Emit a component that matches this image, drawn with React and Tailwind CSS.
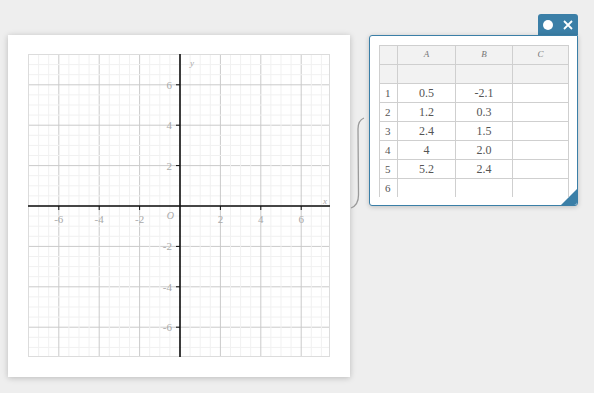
import React from "react";

const S = 20.2;
const O = 152;
const steps = Array.from({ length: 31 }, (_, i) => i - 15);
const ticks = [-6, -4, -2, 2, 4, 6];

const rows = [
  ["1", "0.5", "-2.1"],
  ["2", "1.2", "0.3"],
  ["3", "2.4", "1.5"],
  ["4", "4", "2.0"],
  ["5", "5.2", "2.4"],
  ["6", "", ""],
];

const Graph = () => {
  return (
    <svg width="302" height="303" className="block" style={{ fontFamily: '"Liberation Serif", serif' }}>
      {steps.map((k) => {
        const p = O + (k * S) / 2;
        const major = k % 4 === 0;
        return (
          <g key={k}>
            <line x1={p} y1="0" x2={p} y2="303" stroke={major ? "#cacaca" : "#f1f1f1"} strokeWidth="1" />
            <line x1="0" y1={O - (k * S) / 2} x2="302" y2={O - (k * S) / 2} stroke={major ? "#cacaca" : "#f1f1f1"} strokeWidth="1" />
          </g>
        );
      })}
      <rect x="0.5" y="0.5" width="301" height="302" fill="none" stroke="#dcdcdc" />
      <line x1="0" y1={O} x2="302" y2={O} stroke="#111" strokeWidth="1.6" />
      <line x1={O} y1="0" x2={O} y2="303" stroke="#111" strokeWidth="1.6" />
      {ticks.map((v) => (
        <g key={v} fill="#a9a9a9" fontSize="11">
          <line x1={O + v * S} y1={O} x2={O + v * S} y2={O + 4} stroke="#111" strokeWidth="1" />
          <text x={O + v * S} y={O + 17} textAnchor="middle">{v}</text>
          <line x1={O - 4} y1={O - v * S} x2={O} y2={O - v * S} stroke="#111" strokeWidth="1" />
          <text x={O - 8} y={O - v * S + 4} textAnchor="end">{v}</text>
        </g>
      ))}
      <text x={O - 6} y={O + 13} textAnchor="end" fontSize="10" fontStyle="italic" fill="#a9a9a9">O</text>
      <text x="162" y="12" fontSize="9" fontStyle="italic" fill="#a9a9a9">y</text>
      <text x="295" y="150" fontSize="9" fontStyle="italic" fill="#a9a9a9">x</text>
    </svg>
  );
};

const App = () => {
  return (
    <div className="w-[594px] h-[393px] bg-[#eeeeee] flex items-start pl-2 pt-[14px] font-['Liberation_Serif',serif]">
      {/* graph paper */}
      <div className="mt-[21px] w-[342px] h-[342px] bg-white shadow-[0_1px_6px_rgba(0,0,0,0.22)] pl-5 pt-[19px]">
        <Graph />
      </div>

      {/* link bracket */}
      <div className="w-[19px] mt-[103px]">
        <svg width="19" height="92" className="block">
          <path d="M14 1 C9 3 8 7 8 12 L8.5 78 C8.5 85 6 89 1 91" fill="none" stroke="#9a9a9a" strokeWidth="1.3" />
        </svg>
      </div>

      {/* table window */}
      <div className="flex flex-col items-end">
        <div className="w-10 h-[21px] bg-[#3b7fa7] rounded-t-[3px] flex items-center justify-between px-[5px]">
          <span className="w-[10px] h-[10px] rounded-full bg-white"></span>
          <svg width="10" height="10" className="block">
            <path d="M1 1 L9 9 M9 1 L1 9" stroke="white" strokeWidth="1.8" />
          </svg>
        </div>
        <div className="relative w-[209px] h-[171px] bg-white border border-[#3b7fa7] rounded-[3px] rounded-tr-none shadow-[0_1px_5px_rgba(0,0,0,0.2)] pl-[9px] pt-[9px]">
          <div className="h-[152px] overflow-hidden">
            <table className="border-collapse text-[12px] text-[#555]">
              <tbody>
                <tr className="h-[19px] bg-[#f2f2f2]">
                  <td className="w-[18px] border border-[#cfcfcf]"></td>
                  <td className="w-[58px] border border-[#cfcfcf] text-center italic text-[9px] text-[#777]">A</td>
                  <td className="w-[57px] border border-[#cfcfcf] text-center italic text-[9px] text-[#777]">B</td>
                  <td className="w-[56px] border border-[#cfcfcf] text-center italic text-[9px] text-[#777]">C</td>
                </tr>
                <tr className="h-[19px] bg-[#f2f2f2]">
                  <td className="border border-[#cfcfcf]"></td>
                  <td className="border border-[#cfcfcf]"></td>
                  <td className="border border-[#cfcfcf]"></td>
                  <td className="border border-[#cfcfcf]"></td>
                </tr>
                {rows.map((r) => (
                  <tr key={r[0]} className="h-[19px]">
                    <td className="border border-[#cfcfcf] pl-[5px] p-0 leading-none text-[11px]">{r[0]}</td>
                    <td className="border border-[#cfcfcf] text-center p-0 leading-none">{r[1]}</td>
                    <td className="border border-[#cfcfcf] text-center p-0 leading-none">{r[2]}</td>
                    <td className="border border-[#cfcfcf] p-0"></td>
                  </tr>
                ))}
              </tbody>
            </table>
          </div>
          <svg width="16" height="16" className="absolute right-0 bottom-0 block">
            <path d="M16 0 L16 13 Q16 16 13 16 L0 16 Z" fill="#3b7fa7" />
          </svg>
        </div>
      </div>
    </div>
  );
};

export default App;
